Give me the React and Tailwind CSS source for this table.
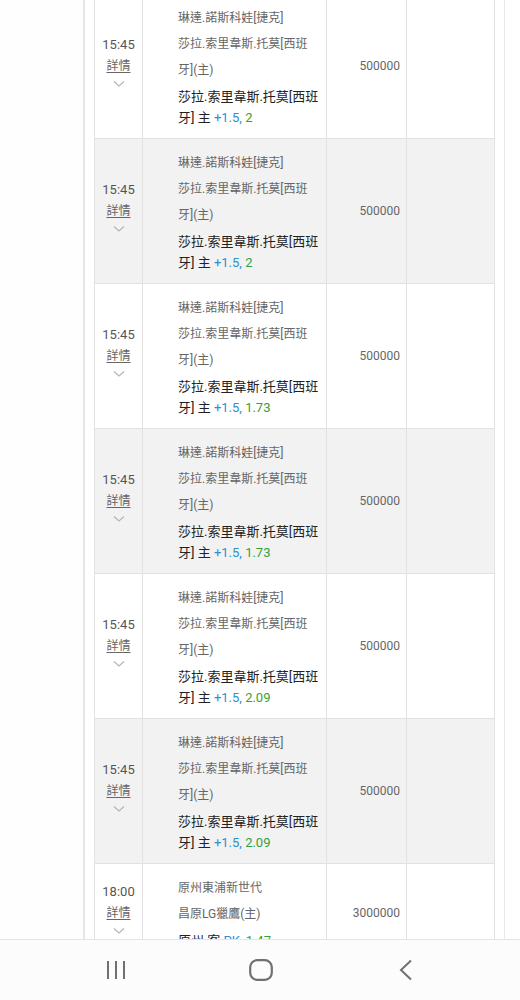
import React from "react";

const rows = [
  { odds: "2", bg: "bg-white" },
  { odds: "2", bg: "bg-[#f2f2f2]" },
  { odds: "1.73", bg: "bg-white" },
  { odds: "1.73", bg: "bg-[#f2f2f2]" },
  { odds: "2.09", bg: "bg-white" },
  { odds: "2.09", bg: "bg-[#f2f2f2]" },
];

function Chevron() {
  return (
    <svg width="12" height="8" viewBox="0 0 12 8" className="mt-[3px]">
      <path d="M1 1.5 L6 6 L11 1.5" fill="none" stroke="#b5b5b5" strokeWidth="1.2" />
    </svg>
  );
}

function TimeCell({ time }) {
  return (
    <div className="flex w-[48px] shrink-0 flex-col items-center justify-center border-r border-[#e2e2e2] pb-[9px]">
      <div className="text-[13px] leading-[20px] text-[#555]">{time}</div>
      <div className="text-[12px] leading-[22px] text-[#666] underline underline-offset-2">詳情</div>
      <Chevron />
    </div>
  );
}

function Row({ bg, time, gray, main, hcp, odds, amount }) {
  return (
    <div className={`flex border-b border-[#e2e2e2] ${bg}`}>
      <TimeCell time={time} />
      <div className="w-[184px] shrink-0 border-r border-[#e2e2e2] pl-[35px] pt-[11px] pb-[10px]">
        {gray.map((g, i) => (
          <div key={i} className="whitespace-nowrap text-[12px] leading-[26px] text-[#666]">
            {g}
          </div>
        ))}
        <div className="mt-[3px] text-[13px] leading-[21px] text-[#222]">
          {main.map((m, i) => (
            <div key={i} className="whitespace-nowrap">
              {i === main.length - 1 ? (
                <>
                  {m} <span className="text-[#2e8fcf]">{hcp}, </span>
                  <span className="text-[#34a23a]">{odds}</span>
                </>
              ) : (
                m
              )}
            </div>
          ))}
        </div>
      </div>
      <div className="flex w-[80px] shrink-0 items-center justify-end border-r border-[#e2e2e2] pr-[6px] text-[12px] text-[#666]">
        {amount}
      </div>
      <div className="w-[88px] shrink-0 border-r border-[#e2e2e2]" />
    </div>
  );
}

export default function App() {
  return (
    <div
      className="relative h-[1000px] w-[520px] overflow-hidden bg-white"
      style={{ fontFamily: 'Roboto, "Noto Sans CJK TC", sans-serif' }}
    >
      <div className="flex h-full">
        <div className="w-[83px] shrink-0 bg-[#fefefe]" />
        <div className="w-[2px] shrink-0 bg-[#e6e6e6]" />
        <div className="w-[9px] shrink-0" />
        <div className="-mt-[6px] w-[401px] shrink-0 border-l border-[#e2e2e2]">
          {rows.map((r, i) => (
            <Row
              key={i}
              bg={r.bg}
              time="15:45"
              gray={["琳達.諾斯科娃[捷克]", "莎拉.索里韋斯.托莫[西班", "牙](主)"]}
              main={["莎拉.索里韋斯.托莫[西班", "牙] 主"]}
              hcp="+1.5"
              odds={r.odds}
              amount="500000"
            />
          ))}
          <Row
            bg="bg-white"
            time="18:00"
            gray={["原州東浦新世代", "昌原LG獵鷹(主)"]}
            main={["原州 客"]}
            hcp="PK"
            odds="1.47"
            amount="3000000"
          />
        </div>
        <div className="w-[9px] shrink-0" />
        <div className="w-[1px] shrink-0 bg-[#e8e8e8]" />
      </div>

      <div className="absolute bottom-0 left-0 right-0 flex h-[61px] items-center justify-center border-t border-[#e4e4e4] bg-[#fcfcfc] pl-[2px]">
        <div className="flex w-[145px] justify-center">
          <svg width="20" height="20" viewBox="0 0 20 20">
            <path d="M2 1 V19 M10 1 V19 M18 1 V19" stroke="#707070" strokeWidth="2" fill="none" />
          </svg>
        </div>
        <div className="flex w-[145px] justify-center">
          <svg width="24" height="22" viewBox="0 0 24 22">
            <rect x="1.2" y="1.2" width="21.6" height="19.6" rx="7" fill="none" stroke="#707070" strokeWidth="2.2" />
          </svg>
        </div>
        <div className="flex w-[145px] justify-center">
          <svg width="16" height="22" viewBox="0 0 16 22">
            <path d="M13 1.5 L3 11 L13 20.5" fill="none" stroke="#707070" strokeWidth="2" />
          </svg>
        </div>
      </div>
    </div>
  );
}
